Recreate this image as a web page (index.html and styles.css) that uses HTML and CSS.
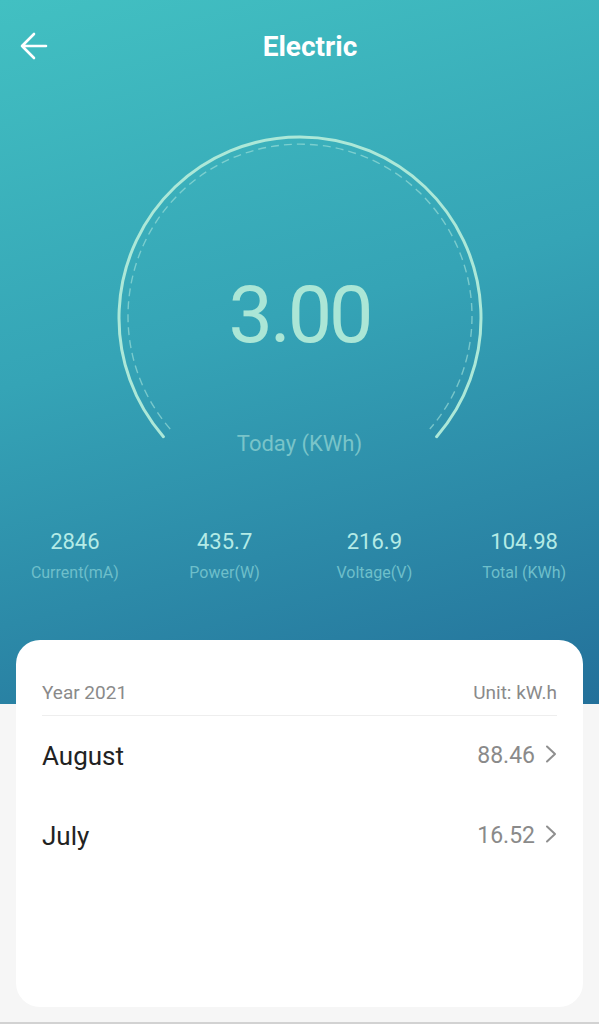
FILE: index.html
```html
<!DOCTYPE html>
<html lang="en">
<head>
  <meta charset="UTF-8" />
  <meta name="viewport" content="width=device-width, initial-scale=1.0"/>
  <title>Electric</title>
  <link rel="stylesheet" href="styles.css">
</head>
<body>
  <div class="hero">
    <div class="topbar">
      <svg class="back" viewBox="0 0 28 28" width="28" height="28">
        <path d="M26 14 H2 M14 2 L2 14 L14 26" fill="none" stroke="#fff" stroke-width="2.6" stroke-linecap="round" stroke-linejoin="round"/>
      </svg>
      <div class="title">Electric</div>
    </div>

    <div class="gauge">
      <svg class="dial" viewBox="0 0 370 310" width="370" height="310">
        <path d="M48.4 303.7 A181 181 0 1 1 321.6 303.7" fill="none" stroke="#ace8d8" stroke-width="3" stroke-linecap="round"/>
        <path d="M55.2 296 A172 172 0 1 1 314.8 296" fill="none" stroke="#a6e4dc" stroke-opacity="0.6" stroke-width="1.4" stroke-dasharray="8 5"/>
      </svg>
      <div class="readout">
        <div class="today-value">3.00</div>
        <div class="today-label">Today (KWh)</div>
      </div>
    </div>

    <div class="stats">
      <div class="stat">
        <div class="stat-value">2846</div>
        <div class="stat-label">Current(mA)</div>
      </div>
      <div class="stat">
        <div class="stat-value">435.7</div>
        <div class="stat-label">Power(W)</div>
      </div>
      <div class="stat">
        <div class="stat-value">216.9</div>
        <div class="stat-label">Voltage(V)</div>
      </div>
      <div class="stat">
        <div class="stat-value">104.98</div>
        <div class="stat-label">Total (KWh)</div>
      </div>
    </div>
  </div>

  <div class="card">
    <div class="card-head">
      <span>Year 2021</span>
      <span>Unit: kW.h</span>
    </div>
    <div class="month">
      <span class="month-name">August</span>
      <span class="month-value">88.46
        <svg class="chevron" viewBox="0 0 12 18" width="12" height="18"><path d="M2 1.5 L10 9 L2 16.5" fill="none" stroke="#8f8f8f" stroke-width="2" stroke-linecap="round" stroke-linejoin="round"/></svg>
      </span>
    </div>
    <div class="month">
      <span class="month-name">July</span>
      <span class="month-value">16.52
        <svg class="chevron" viewBox="0 0 12 18" width="12" height="18"><path d="M2 1.5 L10 9 L2 16.5" fill="none" stroke="#8f8f8f" stroke-width="2" stroke-linecap="round" stroke-linejoin="round"/></svg>
      </span>
    </div>
  </div>

  <div class="navline"></div>
</body>
</html>
```

FILE: styles.css
```css
body {
  margin: 0;
  font-family: Roboto, "Noto Sans", sans-serif;
  background-color: #f6f6f6;
  overflow: hidden;
}
.hero {
  height: 704px;
  box-sizing: border-box;
  padding-top: 30px;
  background: linear-gradient(165deg, #42c0c2 0%, #35a4b6 45%, #23709a 100%);
}
.topbar {
  display: flex;
  align-items: center;
  height: 34px;
  padding: 0 27px 0 20px;
}
.back {
  display: block;
  margin-top: -2px;
}
.title {
  flex: 1;
  text-align: center;
  color: #fff;
  font-size: 28px;
  font-weight: bold;
  line-height: 34px;
}
.gauge {
  display: grid;
  width: 370px;
  margin: 69px auto 0;
}
.dial, .readout {
  grid-area: 1 / 1;
}
.readout {
  padding-top: 142px;
  text-align: center;
}
.today-value {
  font-size: 79px;
  line-height: 80px;
  letter-spacing: -3px;
  color: #abe6d6;
}
.today-label {
  margin-top: 76px;
  font-size: 22px;
  line-height: 26px;
  color: #79c4c9;
}
.stats {
  display: grid;
  grid-template-columns: repeat(4, 1fr);
  margin-top: 72px;
  text-align: center;
}
.stat-value {
  font-size: 22px;
  line-height: 26px;
  color: #b4ebe6;
}
.stat-label {
  margin-top: 8px;
  font-size: 16px;
  line-height: 20px;
  color: #6ebfca;
}
.card {
  height: 367px;
  box-sizing: border-box;
  margin: -64px 16px 0;
  padding: 41px 26px 0;
  background-color: #fff;
  border-radius: 24px;
}
.card-head {
  display: flex;
  justify-content: space-between;
  padding-bottom: 10px;
  border-bottom: 1px solid #eeeeee;
  font-size: 19px;
  line-height: 24px;
  color: #8a8a8a;
}
.month {
  display: flex;
  justify-content: space-between;
  align-items: center;
  height: 80px;
}
.month-name {
  font-size: 26px;
  line-height: 32px;
  color: #222;
}
.month-value {
  display: flex;
  align-items: center;
  gap: 10px;
  font-size: 23px;
  line-height: 32px;
  color: #8a8a8a;
}
.chevron {
  display: block;
  margin-top: -4px;
}
.navline {
  height: 2px;
  margin-top: 15px;
  background-color: #d2d2d2;
}
```
